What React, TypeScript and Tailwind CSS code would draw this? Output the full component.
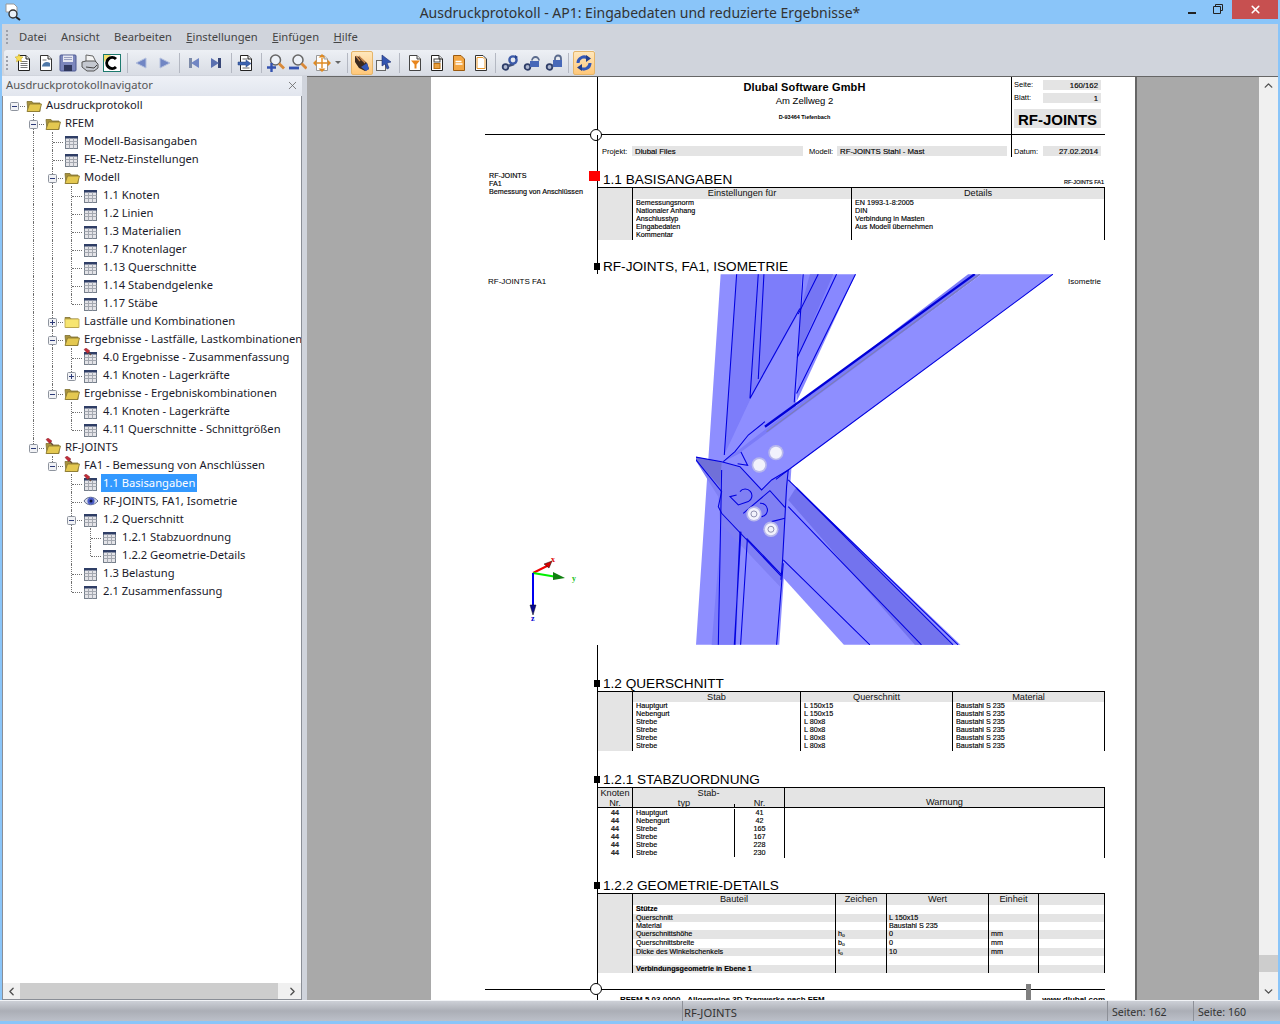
import React from 'react';
import clsx from 'clsx';
import { ChevronDown, ChevronLeft, ChevronRight, ChevronUp, X } from 'lucide-react';

/* ---------- tree ---------- */
type IconKind = 'open' | 'closed' | 'openPin' | 'table' | 'tablePin' | 'eye';
type Node = { label: string; icon: IconKind; state?: '+' | '-'; selected?: boolean; children?: Node[] };

const tbl = (label: string): Node => ({ label, icon: 'table' });

const tree: Node = {
  label: 'Ausdruckprotokoll', icon: 'open', state: '-', children: [
    {
      label: 'RFEM', icon: 'open', state: '-', children: [
        tbl('Modell-Basisangaben'),
        tbl('FE-Netz-Einstellungen'),
        {
          label: 'Modell', icon: 'open', state: '-', children: [
            tbl('1.1 Knoten'), tbl('1.2 Linien'), tbl('1.3 Materialien'), tbl('1.7 Knotenlager'),
            tbl('1.13 Querschnitte'), tbl('1.14 Stabendgelenke'), tbl('1.17 Stäbe'),
          ],
        },
        { label: 'Lastfälle und Kombinationen', icon: 'closed', state: '+' },
        {
          label: 'Ergebnisse - Lastfälle, Lastkombinationen', icon: 'open', state: '-', children: [
            { label: '4.0 Ergebnisse - Zusammenfassung', icon: 'tablePin' },
            { label: '4.1 Knoten - Lagerkräfte', icon: 'table', state: '+' },
          ],
        },
        {
          label: 'Ergebnisse - Ergebniskombinationen', icon: 'open', state: '-', children: [
            tbl('4.1 Knoten - Lagerkräfte'), tbl('4.11 Querschnitte - Schnittgrößen'),
          ],
        },
      ],
    },
    {
      label: 'RF-JOINTS', icon: 'openPin', state: '-', children: [
        {
          label: 'FA1 - Bemessung von Anschlüssen', icon: 'openPin', state: '-', children: [
            { label: '1.1 Basisangaben', icon: 'tablePin', selected: true },
            { label: 'RF-JOINTS, FA1, Isometrie', icon: 'eye' },
            {
              label: '1.2 Querschnitt', icon: 'table', state: '-', children: [
                tbl('1.2.1 Stabzuordnung'), tbl('1.2.2 Geometrie-Details'),
              ],
            },
            tbl('1.3 Belastung'),
            tbl('2.1 Zusammenfassung'),
          ],
        },
      ],
    },
  ],
};

const Pin = () => (
  <g>
    <path d="M4.5 3.5L8 7" stroke="#6A4A3A" strokeWidth="1.2" />
    <path d="M1 1.5L3 0l4 3-2.5 2.5z" fill="#C02C38" stroke="#7C2028" strokeWidth="0.4" />
  </g>
);

const TreeIcon = ({ kind }: { kind: IconKind }) => {
  if (kind === 'table' || kind === 'tablePin') {
    return (
      <svg width="16" height="18" viewBox="0 0 16 18">
        <rect x="1.5" y="4.5" width="12" height="12" fill="#E4E4E8" stroke="#77808C" />
        <rect x="1" y="4" width="13" height="2.5" fill="#2F3E66" />
        <path d="M1.5 9.5h12M1.5 12.5h12M5.5 6.5v10M9.5 6.5v10" stroke="#A4A8B0" />
        {kind === 'tablePin' && <Pin />}
      </svg>
    );
  }
  if (kind === 'eye') {
    return (
      <svg width="16" height="18" viewBox="0 0 16 18">
        <path d="M1 9c3-5 10-5 14 0-4 5-11 5-14 0z" fill="#D8DCEC" stroke="#5A6688" />
        <circle cx="8" cy="9" r="3.6" fill="#4A5CC8" />
        <circle cx="8" cy="9" r="1.5" fill="#10183C" />
      </svg>
    );
  }
  return (
    <svg width="16" height="18" viewBox="0 0 16 18">
      <path d="M1 5.5h5l1 1.5h7v8.5H2z" fill="#A8923C" stroke="#7E7030" strokeWidth="0.8" />
      {kind === 'closed'
        ? <path d="M1 7h14v8.5H1z" fill="#F7E570" stroke="#B9A24A" strokeWidth="0.8" />
        : <path d="M3.5 8h12l-2 7.5H1z" fill="#E4C850" stroke="#85742E" strokeWidth="0.8" />}
      {kind === 'openPin' && <Pin />}
    </svg>
  );
};

const Expander = ({ state }: { state: '+' | '-' }) => (
  <svg className="absolute left-[4px] top-[6px]" width="9" height="9" viewBox="0 0 9 9">
    <rect x="0.5" y="0.5" width="8" height="8" rx="1" fill="#F1F2F5" stroke="#8E949E" />
    <path d="M2 4.5h5" stroke="#2C3A78" />
    {state === '+' && <path d="M4.5 2v5" stroke="#2C3A78" />}
  </svg>
);

// one row plus its children, guides = columns where a parent's line runs on
const TreeRows = ({ node, guides, last, root }: { node: Node; guides: boolean[]; last: boolean; root?: boolean }) => (
  <>
    <div className="flex h-[18px] items-center whitespace-nowrap">
      {guides.map((on, i) => (
        <div key={i} className="h-full w-[19px] shrink-0">
          {on && <div className="ml-[8px] h-full border-l border-dotted border-[#707070]" />}
        </div>
      ))}
      <div className="relative h-full w-[19px] shrink-0">
        {!root && (
          <div className={clsx('ml-[8px] border-l border-dotted border-[#707070]', last ? 'h-[10px]' : 'h-full')} />
        )}
        <div className="absolute left-[9px] top-[10px] w-[10px] border-t border-dotted border-[#707070]" />
        {node.state && <Expander state={node.state} />}
      </div>
      <div className="ml-[1px] shrink-0"><TreeIcon kind={node.icon} /></div>
      <span className={clsx('ml-[2px] px-[2px] leading-[18px]', node.selected ? 'bg-[#3399FF] text-white' : 'text-[#1a1a2a]')}>
        {node.label}
      </span>
    </div>
    {node.children?.map((c, i) => (
      <TreeRows
        key={i}
        node={c}
        guides={root ? [...guides, false] : [...guides, !last]}
        last={i === node.children!.length - 1}
      />
    ))}
  </>
);

/* ---------- toolbar icons ---------- */
const Svg = ({ children }: { children: React.ReactNode }) => (
  <svg width="18" height="18" viewBox="0 0 18 18">{children}</svg>
);
const Sheet = ({ stroke = '#222' }: { stroke?: string }) => (
  <>
    <path d="M3.5 1.5h7.5l3.5 3.5v11.5h-11z" fill="#fff" stroke={stroke} />
    <path d="M11 1.5v3.5h3.5" fill="#E8E8E8" stroke={stroke} />
  </>
);
const Lines = () => <path d="M5.5 7.5h7M5.5 9.5h7M5.5 11.5h7M5.5 13.5h7" stroke="#777" />;
const Chain = () => (
  <>
    <circle cx="4.5" cy="13" r="2.8" fill="#AEB8D0" stroke="#2F3E68" strokeWidth="1.8" />
    <path d="M7 12l6-2" stroke="#3E4E78" strokeWidth="2.6" />
  </>
);

const toolIcons: Record<string, React.ReactNode> = {
  neu: <Svg><Sheet /><Lines /><path d="M4 0l1.2 2.6L8 3l-2 2 .5 2.8L4 6.4 1.5 7.8 2 5 0 3l2.8-.4z" fill="#F7DC52" stroke="#C8A820" strokeWidth="0.5" /></Svg>,
  oeffnen: <Svg><Sheet stroke="#333" /><path d="M5 12c1-4 5-5 8-3v3.5H5z" fill="#4F78A8" /><path d="M5.5 6h4" stroke="#777" /></Svg>,
  speichern: <Svg><rect x="1" y="1" width="16" height="16" rx="1" fill="#7B86BC" stroke="#4E5A92" /><rect x="4" y="1.5" width="10" height="6.5" fill="#E6E8F2" /><path d="M5 3.5h8M5 5.5h8" stroke="#9AA0C0" /><rect x="5" y="11" width="8" height="6" fill="#30385E" /></Svg>,
  drucken: <Svg><path d="M5 1l7 1 3 6H5z" fill="#F4F4F4" stroke="#666" /><path d="M1 8l4-1h9l3 3v4l-4 3H6l-5-4z" fill="#C4C8D0" stroke="#555" /><path d="M5 13l8 1M13 14l3-3" stroke="#444" /></Svg>,
  farbe: <Svg><rect x="0.5" y="0.5" width="17" height="17" fill="#fff" stroke="#1D7A6E" /><path d="M1 1h7L1 8z" fill="#F4E070" /><path d="M13 5a5.5 5.5 0 1 0 0 8" fill="none" stroke="#000" strokeWidth="3" /></Svg>,
  zurueck: <Svg><path d="M3 9l10-5v10z" fill="#7186C4" stroke="#B4C0DE" /></Svg>,
  vor: <Svg><path d="M15 9L5 4v10z" fill="#7186C4" stroke="#B4C0DE" /></Svg>,
  erste: <Svg><path d="M4 4h3v10H4z" fill="#7C8AA8" /><path d="M6 9l8-5v10z" fill="#7186C4" /></Svg>,
  letzte: <Svg><path d="M11 4h3v10h-3z" fill="#394878" /><path d="M12 9L4 4v10z" fill="#5A70B0" /></Svg>,
  gehe: <Svg><Sheet /><path d="M5.5 5h5M5.5 14h7" stroke="#666" /><path d="M1 8h8V6l5 3.5L9 13v-2H1z" fill="#3D63B0" stroke="#24407C" strokeWidth="0.5" /></Svg>,
  plus: <Svg><circle cx="8.5" cy="6" r="5" fill="#EEF2F8" stroke="#666" strokeWidth="1.5" /><path d="M12 9.5l5 5" stroke="#D98A3A" strokeWidth="2.8" /><path d="M0 13.5h9M4.5 9v9" stroke="#3553B0" strokeWidth="2.4" /></Svg>,
  minus: <Svg><circle cx="9" cy="6" r="5" fill="#EEF2F8" stroke="#666" strokeWidth="1.5" /><path d="M12.5 9.5l5 5" stroke="#D98A3A" strokeWidth="2.8" /><path d="M0 14h10" stroke="#3553B0" strokeWidth="2.8" /></Svg>,
  fit: <Svg><Sheet stroke="#999" /><path d="M9 0l3.5 3.5h-7zM9 18l-3.5-3.5h7zM0 9l3.5-3.5v7zM18 9l-3.5 3.5v-7z" fill="#E08A20" /><path d="M9 4v10M4 9h10" stroke="#E08A20" strokeWidth="1.4" /></Svg>,
  hand: <Svg><path d="M2 2l5 1 7 6 2 6-4 2-6-3-4-6z" fill="#3A2A20" /><path d="M3 2l4 5M6 2l4 5M9 5l3 4" stroke="#C88850" strokeWidth="1.3" /><path d="M8 13l6-4 2 6-3 2z" fill="#3056B8" /></Svg>,
  zeiger: <Svg><rect x="1.5" y="6.5" width="9" height="10" fill="#F4F4F4" stroke="#666" /><path d="M7 1l9 7-4 1 2 5-2 1-2-5-3 2z" fill="#3556B0" stroke="#1C2E70" strokeWidth="0.6" /></Svg>,
  filter: <Svg><Sheet stroke="#444" /><path d="M5 6.5h9l-3.5 4v4h-2v-4z" fill="#E8861E" /></Svg>,
  kopf: <Svg><Sheet stroke="#222" /><rect x="6" y="5" width="6" height="3" fill="none" stroke="#444" /><rect x="6" y="9.5" width="6" height="5" fill="#E8A040" stroke="#B86E10" /></Svg>,
  zeilen: <Svg><path d="M3.5 1.5h7.5l3.5 3.5v11.5h-11z" fill="#F3A642" stroke="#9A5A10" /><path d="M5.5 7.5h6M5.5 10h7" stroke="#fff" strokeWidth="1.4" /></Svg>,
  leer: <Svg><path d="M3.5 1.5h7.5l3.5 3.5v11.5h-11z" fill="#fff" stroke="#333" /><path d="M5 3.5h6l2 2v9H5z" fill="none" stroke="#E8982E" /></Svg>,
  link1: <Svg><Chain /><circle cx="12" cy="6" r="3.6" fill="none" stroke="#3C5AA8" strokeWidth="2.4" /><path d="M14 1l3 2-3 2z" fill="#24408C" /></Svg>,
  link2: <Svg><Chain /><path d="M9 6.5a3.5 3.5 0 0 1 7 0" fill="none" stroke="#5A6A8C" strokeWidth="1.8" /><rect x="7" y="7" width="9" height="6" fill="#4768B8" /></Svg>,
  link3: <Svg><Chain /><path d="M10 6V4.5a3 3 0 0 1 6 0V6" fill="none" stroke="#5A6A8C" strokeWidth="1.8" /><rect x="8" y="6" width="9" height="7" fill="#4768B8" /></Svg>,
  refresh: <Svg><path d="M3 9a6 6 0 0 1 10-4.5" fill="none" stroke="#3358B8" strokeWidth="3" /><path d="M15 9a6 6 0 0 1-10 4.5" fill="none" stroke="#3358B8" strokeWidth="3" /><path d="M11 1l5 3.5L11 8zM7 10l-5 3.5L7 17z" fill="#24408C" /></Svg>,
};

const Tool = ({ icon, active, className }: { icon: string; active?: boolean; className?: string }) => (
  <div className={clsx('flex h-[24px] w-[22px] shrink-0 items-center justify-center', active && 'rounded-[2px] border border-[#E5B56A] bg-linear-to-b from-[#FFE7BC] to-[#FFC778]', className)}>
    {toolIcons[icon]}
  </div>
);
const Sep = ({ w }: { w: string }) => (
  <div className={clsx('flex h-[20px] shrink-0 justify-center', w)}>
    <div className="w-px bg-[#B4B8C2]" />
  </div>
);
const Grip = () => (
  <div className="flex shrink-0 flex-col gap-[2px]">
    <div className="h-[2px] w-[2px] bg-[#9CA0AA]" /><div className="h-[2px] w-[2px] bg-[#9CA0AA]" />
    <div className="h-[2px] w-[2px] bg-[#9CA0AA]" /><div className="h-[2px] w-[2px] bg-[#9CA0AA]" />
  </div>
);

/* ---------- document page ---------- */
const Row = ({ margin, children, className }: { margin?: React.ReactNode; children?: React.ReactNode; className?: string }) => (
  <div className={clsx('flex', className)}>
    <div className="w-[112px] shrink-0">{margin}</div>
    <div className="relative min-w-0 flex-1 border-l border-black">{children}</div>
  </div>
);

const Heading = ({ text, h, right, red }: { text: string; h: string; right?: string; red?: boolean }) => (
  <div className={clsx('relative flex items-end justify-between', h)}>
    <span className="pl-[5px] text-[13.6px] leading-[14px] text-black">{text}</span>
    {right && <span className="pb-[1px] pr-[1px] text-[5.5px] leading-[8px] [-webkit-text-stroke:0.15px_black]">{right}</span>}
    {red
      ? <div className="absolute bottom-[6px] left-[-9px] h-[10px] w-[11px] bg-[#FF0000]" />
      : <div className="absolute bottom-[4px] left-[-4px] h-[7px] w-[6px] bg-black" />}
  </div>
);

const Cell = ({ children, h = 'h-[8px]', className }: { children?: React.ReactNode; h?: string; className?: string }) => (
  <div className={clsx('overflow-hidden whitespace-nowrap text-[7.2px] leading-[8px] [-webkit-text-stroke:0.15px_black]', h, className)}>{children}</div>
);
const Head = ({ children, h, className }: { children?: React.ReactNode; h: string; className?: string }) => (
  <div className={clsx('bg-[#E4E4E4] text-center text-[9.2px] text-[#111]', h, className)}>{children}</div>
);
const Field = ({ children, className }: { children?: React.ReactNode; className?: string }) => (
  <div className={clsx('h-[10px] bg-[#E4E4E4] text-[7.8px] leading-[11px] [-webkit-text-stroke:0.15px_black]', className)}>{children}</div>
);

const basis = ['Bemessungsnorm', 'Nationaler Anhang', 'Anschlusstyp', 'Eingabedaten', 'Kommentar'];
const basisVal = ['EN 1993-1-8:2005', 'DIN', 'Verbindung in Masten', 'Aus Modell übernehmen', ''];
const staebe = ['Hauptgurt', 'Nebengurt', 'Strebe', 'Strebe', 'Strebe', 'Strebe'];
const profile = ['L 150x15', 'L 150x15', 'L 80x8', 'L 80x8', 'L 80x8', 'L 80x8'];
const stabNr = ['41', '42', '165', '167', '228', '230'];

const geoH = ['h-[9px]', 'h-[8px]', 'h-[8px]', 'h-[9px]', 'h-[9px]', 'h-[8px]', 'h-[9px]', 'h-[8px]'];
const geo: string[][] = [
  ['Stütze', '', '', ''],
  ['Querschnitt', '', 'L 150x15', ''],
  ['Material', '', 'Baustahl S 235', ''],
  ['Querschnittshöhe', 'h₀', '0', 'mm'],
  ['Querschnittsbreite', 'b₀', '0', 'mm'],
  ['Dicke des Winkelschenkels', 't₀', '10', 'mm'],
  ['', '', '', ''],
  ['Verbindungsgeometrie in Ebene 1', '', '', ''],
];
const geoCols = [
  { head: 'Bauteil', w: 'w-[203px]' },
  { head: 'Zeichen', w: 'w-[51px]' },
  { head: 'Wert', w: 'w-[102px]' },
  { head: 'Einheit', w: 'w-[50px]' },
  { head: '', w: 'flex-1' },
];

const Triad = () => (
  <svg width="60" height="70" viewBox="0 0 60 70">
    <path d="M8 18L24 10" stroke="#F00000" strokeWidth="2" />
    <path d="M19 9l8-3-3 7z" fill="#D80000" stroke="#111" strokeWidth="0.5" />
    <path d="M8 18l24 4" stroke="#00F000" strokeWidth="2" />
    <path d="M28 17l12 6-12 2z" fill="#108010" />
    <path d="M8 18v32" stroke="#0000F0" strokeWidth="2" />
    <path d="M5 50h6l-3 10z" fill="#0A0A90" stroke="#111" strokeWidth="0.5" />
    <text x="26" y="7" fontSize="8" fontWeight="700" fill="#E00000" fontFamily="Liberation Serif, serif">x</text>
    <text x="47" y="26" fontSize="8" fontWeight="700" fill="#10C010" fontFamily="Liberation Serif, serif">y</text>
    <text x="6" y="66" fontSize="8" fontWeight="700" fill="#0000D0" fontFamily="Liberation Serif, serif">z</text>
  </svg>
);

const Bolt = ({ x, y, ring }: { x: number; y: number; ring?: boolean }) => (
  <g>
    <circle cx={x} cy={y} r="23" fill="#B8B8EC" />
    <circle cx={x} cy={y} r="18" fill="#F2F2FC" />
    {ring && <circle cx={x} cy={y} r="9" fill="none" stroke="#9090B0" strokeWidth="3" />}
  </g>
);

// steel joint, coordinates taken from the picture at 3x
const Joint = () => (
  <svg width="357" height="371" viewBox="168 12 1072 1113" className="shrink-0">
    <path d="M242 12h250l-8 170-30 420-4 60-32 463H168z" fill="#8E8EFF" />
    <path d="M290 12h195l-5 110-147 262-80 170z" fill="#7D7DFA" />
    <path d="M215 1125l32-395 60 55-4 30-15 310z" fill="#7D7DFA" />
    <path d="M492 12h155L470 395l5-145z" fill="#8888FF" />
    <path d="M510 12h70L475 255l5-130z" fill="#7676F4" />
    <path d="M445 630l517 495H612L425 918z" fill="#8E8EFF" />
    <path d="M445 690l25-40 470 475h-115z" fill="#7373EE" />
    <path d="M160 560l90 15 55 20 60 65 30-30 50-30-5 100-15 240-5 10-180-190-5-80z" fill="#8080F4" />
    <path d="M160 560l85 15-5 75z" fill="#7070D8" />
    <path d="M985 12h40L320 540l-70 35z" fill="#7C7CF8" />
    <path d="M1025 12h215L408 628l-105-82z" fill="#8E8EFF" />
    <g fill="none" stroke="#0000E0" strokeWidth="3.2">
      <path d="M1240 12L445 600 408 628" />
      <path d="M303 546l20 40-30-5M250 575l35-30 40-50 50-40" />
      <path d="M290 12l-37 543M355 12l-25 373 150-270M372 12l-17 315M490 12l-27 385" />
      <path d="M535 12l-60 120M590 12L472 262M647 12L470 370" />
      <path d="M160 560l85 15 55 15 65 70 30-30 50-30-5 50-12 220-5 60M160 560l85 105-10 45 10 20 180 190" />
      <path d="M245 600l-10 525M303 785l-20 340M322 810l-20 315M300 785l-15 340M410 1125l20-245" />
      <path d="M445 630l510 495M470 655l470 470M445 710l400 415M430 870l260 255M320 805l105 110" />
      <path d="M310 730l80-68 45 50M300 665a20 20 0 1 1 25 30l-30 10-25-25 20-5M360 700a18 18 0 0 1 5 40M395 755l40-10" />
    </g>
    <path d="M1005 12L375 470" stroke="#0000D8" strokeWidth="7" fill="none" />
    <path d="M1020 12L380 485" stroke="#7C7CB8" strokeWidth="3.5" fill="none" />
    <Bolt x={408} y={548} />
    <Bolt x={358} y={585} />
    <Bolt x={342} y={732} ring />
    <Bolt x={393} y={778} ring />
  </svg>
);

const Page = () => (
  <div className="relative h-[923px] w-[704px] shrink-0 overflow-hidden bg-white pl-[54px] font-['Liberation_Sans',Arial,sans-serif] text-black">
    <div className="w-[620px]">
      {/* Kopf */}
      <Row className="h-[58px] border-b border-black">
        <div className="flex h-full">
          <div className="flex w-[413px] flex-col items-center pt-[4px]">
            <div className="text-[11px] font-bold leading-[13px] tracking-[0.15px]">Dlubal Software GmbH</div>
            <div className="text-[9.5px] leading-[14px]">Am Zellweg 2</div>
            <div className="mt-[5px] text-[5.5px] font-bold leading-[8px]">D-93464 Tiefenbach</div>
          </div>
          <div className="flex-1 border-l border-black pl-[2px] pr-[4px] pt-[3px]">
            <div className="flex items-center justify-between text-[7.5px] leading-[10px]">
              <span>Seite:</span>
              <Field className="w-[58px] pr-[3px] text-right">160/162</Field>
            </div>
            <div className="mt-[3px] flex items-center justify-between text-[7.5px] leading-[10px]">
              <span>Blatt:</span>
              <Field className="w-[58px] pr-[3px] text-right">1</Field>
            </div>
            <div className="mt-[6px] h-[19px] bg-[#E4E4E4] text-center text-[15px] font-bold leading-[21px]">RF-JOINTS</div>
          </div>
        </div>
        <div className="absolute bottom-[-7px] left-[-8px] h-[12px] w-[12px] rounded-full border border-black bg-white" />
      </Row>
      <Row className="h-[22px]">
        <div className="flex h-full">
          <div className="flex w-[413px] items-start gap-[3px] pl-[4px] pt-[11px] text-[7.5px]">
            <span className="w-[27px] leading-[11px]">Projekt:</span>
            <Field className="w-[171px] pl-[3px]">Dlubal Files</Field>
            <span className="ml-[3px] w-[25px] leading-[11px]">Modell:</span>
            <Field className="w-[170px] pl-[3px]">RF-JOINTS Stahl - Mast</Field>
          </div>
          <div className="flex flex-1 items-start justify-between border-l border-black pl-[2px] pr-[4px] pt-[11px] text-[7.5px]">
            <span className="leading-[11px]">Datum:</span>
            <Field className="w-[58px] pr-[3px] text-right">27.02.2014</Field>
          </div>
        </div>
      </Row>

      {/* 1.1 */}
      <Row
        margin={
          <div className="pl-[4px] pt-[15px] text-[7.2px] leading-[8px] [-webkit-text-stroke:0.15px_black]">
            <div>RF-JOINTS</div><div>FA1</div><div>Bemessung von Anschlüssen</div>
          </div>
        }
      >
        <Heading text="1.1 BASISANGABEN" h="h-[30px]" right="RF-JOINTS FA1" red />
        <div className="flex h-[53px] border-t border-black">
          <div className="w-[34px] bg-[#E4E4E4]" />
          <div className="w-[219px] border-l border-black">
            <Head h="h-[11px] leading-[11px]">Einstellungen für</Head>
            <div className="pl-[3px]">{basis.map(t => <Cell key={t}>{t}</Cell>)}</div>
          </div>
          <div className="flex-1 border-x border-x-black border-l-black">
            <Head h="h-[11px] leading-[11px]">Details</Head>
            <div className="pl-[3px]">{basisVal.map((t, i) => <Cell key={i}>{t}</Cell>)}</div>
          </div>
        </div>
      </Row>

      {/* Isometrie */}
      <Row>
        <Heading text="RF-JOINTS, FA1, ISOMETRIE" h="h-[34px]" />
      </Row>
      <div className="flex h-[371px]">
        <div className="flex w-[211px] shrink-0 flex-col text-[8px] leading-[8px]">
          <div className="pl-[3px] pt-[4px]">RF-JOINTS FA1</div>
          <div className="ml-[40px] mt-[269px]"><Triad /></div>
        </div>
        <Joint />
        <div className="flex-1 pr-[4px] pt-[4px] text-right text-[8px] leading-[8px]">Isometrie</div>
      </div>

      {/* 1.2 */}
      <Row>
        <Heading text="1.2 QUERSCHNITT" h="h-[46px]" />
        <div className="flex h-[60px] border-t border-black">
          <div className="w-[34px] bg-[#E4E4E4]" />
          {[
            { head: 'Stab', w: 'w-[168px]', rows: staebe },
            { head: 'Querschnitt', w: 'w-[152px]', rows: profile },
            { head: 'Material', w: 'flex-1 border-r', rows: Array(6).fill('Baustahl S 235') as string[] },
          ].map(c => (
            <div key={c.head} className={clsx('border-l border-black', c.w)}>
              <Head h="h-[10px] leading-[10px]">{c.head}</Head>
              <div className="pl-[3px]">{c.rows.map((t, i) => <Cell key={i}>{t}</Cell>)}</div>
            </div>
          ))}
        </div>
      </Row>

      {/* 1.2.1 */}
      <Row>
        <Heading text="1.2.1 STABZUORDNUNG" h="h-[36px]" />
        <div className="flex h-[71px] border-t border-black">
          <div className="w-[34px]">
            <Head h="h-[20px] border-b border-black leading-[10px]">Knoten<br />Nr.</Head>
            <div className="pt-[1px]">{stabNr.map((_, i) => <Cell key={i} className="text-center font-bold text-[#333]">44</Cell>)}</div>
          </div>
          <div className="w-[152px] border-l border-black">
            <Head h="h-[10px] leading-[10px]">Stab-</Head>
            <div className="flex">
              <Head h="relative h-[10px] w-[102px] border-b border-black leading-[11px]">
                typ
                <div className="absolute bottom-0 right-0 h-[3px] w-px bg-black" />
              </Head>
              <Head h="h-[10px] flex-1 border-b border-black leading-[11px]">Nr.</Head>
            </div>
            <div className="flex pt-[1px]">
              <div className="w-[102px] border-r border-black pl-[3px]">{staebe.map((t, i) => <Cell key={i}>{t}</Cell>)}</div>
              <div className="flex-1">{stabNr.map(t => <Cell key={t} className="text-center">{t}</Cell>)}</div>
            </div>
          </div>
          <div className="flex-1 border-x border-black">
            <Head h="flex h-[20px] items-end justify-center border-b border-black leading-[10px]">Warnung</Head>
          </div>
        </div>
      </Row>

      {/* 1.2.2 */}
      <Row>
        <Heading text="1.2.2 GEOMETRIE-DETAILS" h="h-[35px]" />
        <div className="flex h-[80px] border-t border-black">
          <div className="w-[34px] bg-[#E4E4E4]" />
          {geoCols.map((c, col) => (
            <div key={col} className={clsx('border-l border-black', c.w, col === 4 && 'border-r')}>
              <Head h="h-[11px] leading-[11px]">{c.head}</Head>
              {geo.map((r, i) => (
                <Cell
                  key={i}
                  h={geoH[i]}
                  className={clsx(i % 2 === 1 && 'bg-[#E4E4E4]', col === 0 ? 'pl-[3px]' : 'pl-[2px]', col === 0 && (i === 0 || i === 7) && 'font-bold')}
                >
                  {col < 4 ? r[col] : ''}
                </Cell>
              ))}
            </div>
          ))}
        </div>
      </Row>

      <Row className="h-[16px]" />

      {/* Fuss */}
      <div className="relative border-t border-black">
        <Row className="h-[12px]">
          <div className="flex items-start justify-between pl-[22px] pt-[5px] text-[8px] font-bold leading-[9px]">
            <span>RFEM 5.03.0000 - Allgemeine 3D-Tragwerke nach FEM</span>
            <span>www.dlubal.com</span>
          </div>
        </Row>
        <div className="absolute left-[105px] top-[-7px] h-[12px] w-[12px] rounded-full border border-black bg-white" />
        <div className="absolute left-[541px] top-[-6px] h-[20px] w-[5px] bg-[#808080]" />
      </div>
    </div>
  </div>
);

/* ---------- window ---------- */
export default function App() {
  return (
    <div className="flex h-[1024px] w-[1280px] flex-col overflow-hidden bg-[#8AC5F9] px-[2px] pb-[3px] font-['Noto_Sans',sans-serif] text-[11.2px]">
      {/* Titelleiste */}
      <div className="relative flex h-[24px] shrink-0 items-center justify-center text-[14px] text-[#333]">
        <svg className="absolute left-[2px] top-[3px]" width="18" height="18" viewBox="0 0 18 18">
          <path d="M2 1h8l3 3v5H2z" fill="#fff" stroke="#999" />
          <circle cx="9" cy="11" r="4" fill="#E8F0F8" stroke="#333" strokeWidth="1.4" />
          <path d="M12 14l4 3" stroke="#222" strokeWidth="2" />
        </svg>
        <span>Ausdruckprotokoll - AP1: Eingabedaten und reduzierte Ergebnisse*</span>
        <div className="absolute right-[82px] top-[12px] h-[2px] w-[8px] bg-[#222]" />
        <svg className="absolute right-[55px] top-[4px]" width="10" height="10" viewBox="0 0 10 10">
          <path d="M2.5 2.5V.5h7v6h-2M.5 2.5h7v7h-7z" fill="none" stroke="#222" />
        </svg>
        <div className="absolute right-0 top-0 flex h-[19px] w-[46px] items-center justify-center bg-[#C75050]">
          <X size={13} strokeWidth={3} className="text-white" />
        </div>
      </div>

      {/* Menue */}
      <div className="flex h-[26px] shrink-0 items-center bg-[#D0D4DC] pl-[4px] text-[#444]">
        <Grip />
        <div className="ml-[11px] flex gap-[14.4px]">
          <span>Datei</span>
          <span>Ansicht</span>
          <span>Bearbeiten</span>
          <span><u>E</u>instellungen</span>
          <span><u>E</u>infügen</span>
          <span><u>H</u>ilfe</span>
        </div>
      </div>

      {/* Werkzeuge */}
      <div className="flex h-[26px] shrink-0 items-start bg-[#D0D4DC] pl-[2px]">
        <div className="flex h-[25px] w-[591px] items-center rounded-[3px] bg-linear-to-b from-[#EDF0F5] to-[#D8DCE4] pl-[2px]">
          <Grip />
          <div className="ml-[5px] flex items-center">
            <Tool icon="neu" /><Tool icon="oeffnen" /><Tool icon="speichern" /><Tool icon="drucken" /><Tool icon="farbe" />
            <Sep w="w-[8px]" />
            <Tool icon="zurueck" /><Tool icon="vor" />
            <Sep w="w-[8px]" />
            <Tool icon="erste" /><Tool icon="letzte" />
            <Sep w="w-[8px]" />
            <Tool icon="gehe" />
            <Sep w="w-[8px]" />
            <Tool icon="plus" /><Tool icon="minus" />
            <Tool icon="fit" className="ml-[2px]" />
            <div className="ml-[2px] h-0 w-0 border-x-[3px] border-t-[3px] border-x-transparent border-t-[#666]" />
            <div className="w-[2px]" />
            <Sep w="w-[8px]" />
            <Tool icon="hand" active /><Tool icon="zeiger" />
            <Sep w="w-[8px]" />
            <Tool icon="filter" className="ml-[1px]" /><Tool icon="kopf" /><Tool icon="zeilen" /><Tool icon="leer" />
            <Sep w="w-[6px]" />
            <Tool icon="link1" className="ml-[1px]" /><Tool icon="link2" /><Tool icon="link3" />
            <Sep w="w-[6px]" />
            <Tool icon="refresh" active className="ml-[2px]" />
          </div>
        </div>
      </div>

      {/* Hauptbereich */}
      <div className="flex min-h-0 flex-1 bg-[#D0D4DC]">
        {/* Navigator */}
        <div className="flex w-[300px] shrink-0 flex-col">
          <div className="flex h-[20px] shrink-0 items-center justify-between bg-linear-to-b from-[#EEF1F7] to-[#E2E6EE] pb-[1px] pl-[4px] pr-[3px] text-[#555]">
            <span>Ausdruckprotokollnavigator</span>
            <X size={13} strokeWidth={1.5} className="text-[#666]" />
          </div>
          <div className="flex min-h-0 flex-1 flex-col border-x border-b border-[#8A8E96] bg-white">
            <div className="min-h-0 flex-1 overflow-hidden pl-[3px]">
              <TreeRows node={tree} guides={[]} last root />
            </div>
            <div className="flex h-[16px] shrink-0 items-center bg-[#F0F0F0] text-[#505050]">
              <ChevronLeft size={13} strokeWidth={2.5} className="ml-[2px]" />
              <div className="ml-[2px] h-full w-[258px] bg-[#CDCDCD]" />
              <div className="flex-1" />
              <ChevronRight size={13} strokeWidth={2.5} className="mr-[2px]" />
            </div>
          </div>
        </div>

        {/* Vorschau */}
        <div className="ml-[5px] flex min-w-0 flex-1 flex-col">
          <div className="flex min-h-0 flex-1 border-t border-[#666]">
            <div className="flex min-w-0 flex-1 bg-[#A9A9A9] pl-[124px]">
              <Page />
              <div className="w-[2px] shrink-0 bg-[#666]" />
            </div>
            <div className="flex w-[19px] shrink-0 flex-col items-center bg-[#F0F0F0] text-[#505050]">
              <ChevronUp size={13} strokeWidth={2.5} className="mt-[2px]" />
              <div className="flex-1" />
              <div className="mb-[13px] h-[17px] w-full bg-[#CDCDCD]" />
              <ChevronDown size={13} strokeWidth={2.5} className="mb-[2px]" />
            </div>
          </div>
        </div>
      </div>

      {/* Statusleiste */}
      <div className="-mx-[2px] flex h-[21px] shrink-0 border-t border-[#F0F2F6] bg-linear-to-b from-[#CDD0D7] via-[#ABAEB6] to-[#BCC0C9] text-[#333]">
        <div className="w-[682px] shrink-0" />
        <div className="w-[425px] shrink-0 border-l border-[#8D9098] pl-[1px] leading-[23px]">RF-JOINTS</div>
        <div className="w-[86px] shrink-0 border-l border-[#8D9098] pl-[4px] text-[10.6px] leading-[23px]">Seiten: 162</div>
        <div className="flex-1 border-l border-[#8D9098] pl-[4px] text-[10.6px] leading-[23px]">Seite: 160</div>
      </div>
    </div>
  );
}
